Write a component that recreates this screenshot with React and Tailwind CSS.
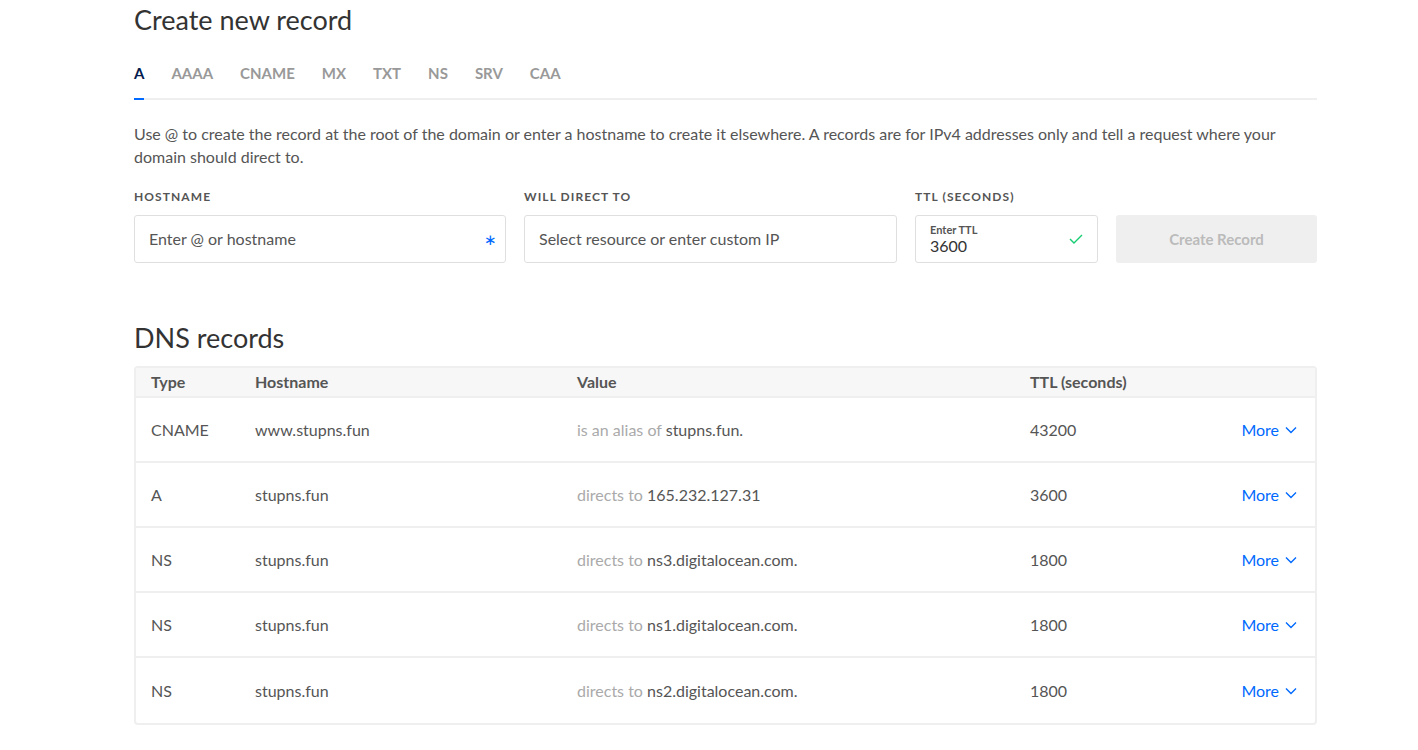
import React from 'react';

const tabs = ['A', 'AAAA', 'CNAME', 'MX', 'TXT', 'NS', 'SRV', 'CAA'];

const records = [
  { type: 'CNAME', host: 'www.stupns.fun', label: 'is an alias of', value: 'stupns.fun.', ttl: '43200' },
  { type: 'A', host: 'stupns.fun', label: 'directs to', value: '165.232.127.31', ttl: '3600' },
  { type: 'NS', host: 'stupns.fun', label: 'directs to', value: 'ns3.digitalocean.com.', ttl: '1800' },
  { type: 'NS', host: 'stupns.fun', label: 'directs to', value: 'ns1.digitalocean.com.', ttl: '1800' },
  { type: 'NS', host: 'stupns.fun', label: 'directs to', value: 'ns2.digitalocean.com.', ttl: '1800' },
];

function Chevron() {
  return (
    <svg width="12" height="8" viewBox="0 0 12 8" fill="none" className="ml-[6px]">
      <path d="M1 1.5l5 5 5-5" stroke="#0069ff" strokeWidth="1.4" />
    </svg>
  );
}

export default function App() {
  return (
    <div className="min-h-screen bg-white font-['Lato',sans-serif] text-[#4d4d4d]">
      <div className="ml-[134px] w-[1183px]">
        {/* Create record */}
        <h1 className="pt-[4px] text-[27px] leading-[32px] text-[#333]">Create new record</h1>

        {/* Tabs */}
        <div className="mt-[28px] flex border-b-2 border-[#efefef]">
          {tabs.map((t, i) => (
            <div
              key={t}
              className={
                i === 0
                  ? 'relative mr-[27px] pb-[16px] text-[15px] font-bold leading-[18px] text-[#031b4e]'
                  : 'mr-[27px] pb-[16px] text-[15px] font-bold leading-[18px] text-[#999]'
              }
            >
              {t}
              {i === 0 && <div className="absolute bottom-[-2px] left-0 h-[2px] w-[10px] bg-[#0069ff]"></div>}
            </div>
          ))}
        </div>

        <p className="mt-[22px] text-[16px] leading-[23px] text-[#555]">
          Use @ to create the record at the root of the domain or enter a hostname to create it elsewhere. A records are for IPv4 addresses only and tell a request where your domain should direct to.
        </p>

        {/* Form */}
        <div className="mt-[21px] flex gap-[18px]">
          <div className="w-[372px]">
            <div className="text-[12px] font-bold uppercase leading-[15px] tracking-[0.09em] text-[#555]">Hostname</div>
            <div className="mt-[11px] flex h-[48px] items-center justify-between rounded-[3px] border border-[#dfdfdf] pl-[14px] pr-[8px] text-[16px] text-[#555]">
              <span>Enter @ or hostname</span>
              <span className="text-[15px] text-[#0069ff]">∗</span>
            </div>
          </div>
          <div className="w-[373px]">
            <div className="text-[12px] font-bold uppercase leading-[15px] tracking-[0.09em] text-[#555]">Will direct to</div>
            <div className="mt-[11px] flex h-[48px] items-center rounded-[3px] border border-[#dfdfdf] px-[14px] text-[16px] text-[#555]">
              Select resource or enter custom IP
            </div>
          </div>
          <div className="w-[183px]">
            <div className="text-[12px] font-bold uppercase leading-[15px] tracking-[0.09em] text-[#555]">TTL (seconds)</div>
            <div className="mt-[11px] flex h-[48px] items-center justify-between rounded-[3px] border border-[#dfdfdf] pl-[14px] pr-[14px]">
              <div className="flex flex-col">
                <span className="text-[11px] font-bold leading-[12px] text-[#555]">Enter TTL</span>
                <span className="text-[16px] leading-[19px] text-[#333]">3600</span>
              </div>
              <svg width="14" height="10" viewBox="0 0 14 10" fill="none">
                <path d="M1 5l4 4 8-8" stroke="#15cd72" strokeWidth="1.4" />
              </svg>
            </div>
          </div>
          <div className="flex-1 pt-[26px]">
            <div className="flex h-[48px] items-center justify-center rounded-[3px] bg-[#efefef] text-[15px] font-bold text-[#bbb]">
              Create Record
            </div>
          </div>
        </div>

        {/* DNS records */}
        <h2 className="mt-[59px] text-[27px] leading-[32px] text-[#333]">DNS records</h2>

        <div className="mt-[12px] overflow-hidden rounded-[4px] border-2 border-[#efefef]">
          <div className="flex h-[28px] items-center bg-[#f7f7f7] text-[16px] font-bold text-[#555]">
            <div className="w-[119px] pl-[15px]">Type</div>
            <div className="w-[322px]">Hostname</div>
            <div className="w-[453px]">Value</div>
            <div className="flex-1">TTL (seconds)</div>
          </div>
          {records.map((r, i) => (
            <div
              key={i}
              className={
                i === records.length - 1
                  ? 'flex h-[67px] items-center border-t-2 border-[#efefef] text-[16px] text-[#555]'
                  : 'flex h-[65px] items-center border-t-2 border-[#efefef] text-[16px] text-[#555]'
              }
            >
              <div className="w-[119px] pl-[15px]">{r.type}</div>
              <div className="w-[322px]">{r.host}</div>
              <div className="w-[453px]">
                <span className="text-[#aaa]">{r.label}</span> {r.value}
              </div>
              <div className="flex-1">{r.ttl}</div>
              <div className="flex items-center pr-[18px] text-[#0069ff]">
                More
                <Chevron />
              </div>
            </div>
          ))}
        </div>
      </div>
    </div>
  );
}
